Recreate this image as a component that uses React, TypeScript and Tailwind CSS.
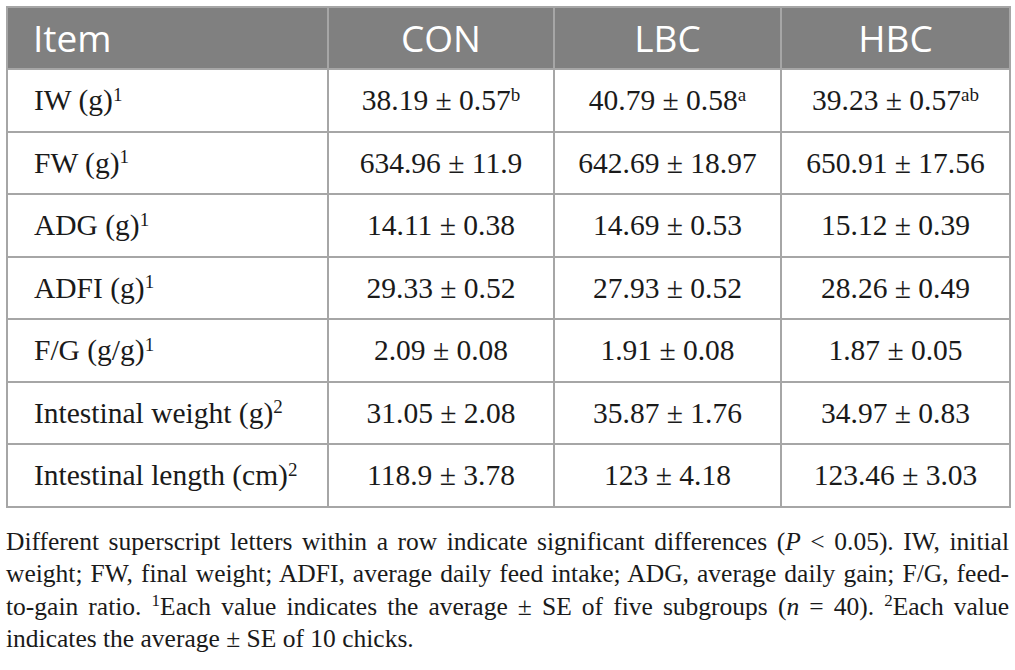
const rows: [string, string, string[], string[]][] = [
    ["IW (g)", "1", ["38.19 ± 0.57", "40.79 ± 0.58", "39.23 ± 0.57"], ["b", "a", "ab"]],
    ["FW (g)", "1", ["634.96 ± 11.9", "642.69 ± 18.97", "650.91 ± 17.56"], ["", "", ""]],
    ["ADG (g)", "1", ["14.11 ± 0.38", "14.69 ± 0.53", "15.12 ± 0.39"], ["", "", ""]],
    ["ADFI (g)", "1", ["29.33 ± 0.52", "27.93 ± 0.52", "28.26 ± 0.49"], ["", "", ""]],
    ["F/G (g/g)", "1", ["2.09 ± 0.08", "1.91 ± 0.08", "1.87 ± 0.05"], ["", "", ""]],
    ["Intestinal weight (g)", "2", ["31.05 ± 2.08", "35.87 ± 1.76", "34.97 ± 0.83"], ["", "", ""]],
    ["Intestinal length (cm)", "2", ["118.9 ± 3.78", "123 ± 4.18", "123.46 ± 3.03"], ["", "", ""]],
];

const App = () => {
    return (
        <div className="w-[1015px] h-[670px] bg-white pt-[6px] px-[6px]">
            {/* TABLE */}
            <table className="w-[1003px] border-collapse table-fixed">
                <colgroup>
                    <col className="w-[321px]" />
                    <col className="w-[226px]" />
                    <col className="w-[227px]" />
                    <col className="w-[229px]" />
                </colgroup>
                <thead>
                    <tr className="h-[62px] bg-[#808080] text-white font-['Open_Sans',sans-serif] text-[37px]">
                        <th className="border-2 border-[#a6a6a6] text-left font-normal pl-[25px]">Item</th>
                        <th className="border-2 border-[#a6a6a6] font-normal">CON</th>
                        <th className="border-2 border-[#a6a6a6] font-normal">LBC</th>
                        <th className="border-2 border-[#a6a6a6] font-normal">HBC</th>
                    </tr>
                </thead>
                <tbody className="font-['Liberation_Serif',serif] text-[29.5px] text-[#1a1a1a]">
                    {rows.map(([label, note, vals, sups]) => (
                        <tr key={label} className="h-[62.5px]">
                            <td className="border-2 border-[#a6a6a6] pl-[26px]">
                                {label}<sup className="text-[19px]">{note}</sup>
                            </td>
                            {vals.map((v, i) => (
                                <td key={i} className="border-2 border-[#a6a6a6] text-center">
                                    {v}
                                    {sups[i] && <sup className="text-[19px]">{sups[i]}</sup>}
                                </td>
                            ))}
                        </tr>
                    ))}
                </tbody>
            </table>
            {/* FOOTNOTE */}
            <div className="mt-[18px] font-['Liberation_Serif',serif] text-[25.5px] leading-[32.5px] text-[#1a1a1a]">
                <p className="text-justify [text-align-last:justify]">Different superscript letters within a row indicate significant differences (<i>P</i> &lt; 0.05). IW, initial</p>
                <p className="text-justify [text-align-last:justify]">weight; FW, final weight; ADFI, average daily feed intake; ADG, average daily gain; F/G, feed-</p>
                <p className="text-justify [text-align-last:justify]">to-gain ratio. <sup className="text-[17px]">1</sup>Each value indicates the average ± SE of five subgroups (<i>n</i> = 40). <sup className="text-[17px]">2</sup>Each value</p>
                <p>indicates the average ± SE of 10 chicks.</p>
            </div>
        </div>
    );
};

export default App;
